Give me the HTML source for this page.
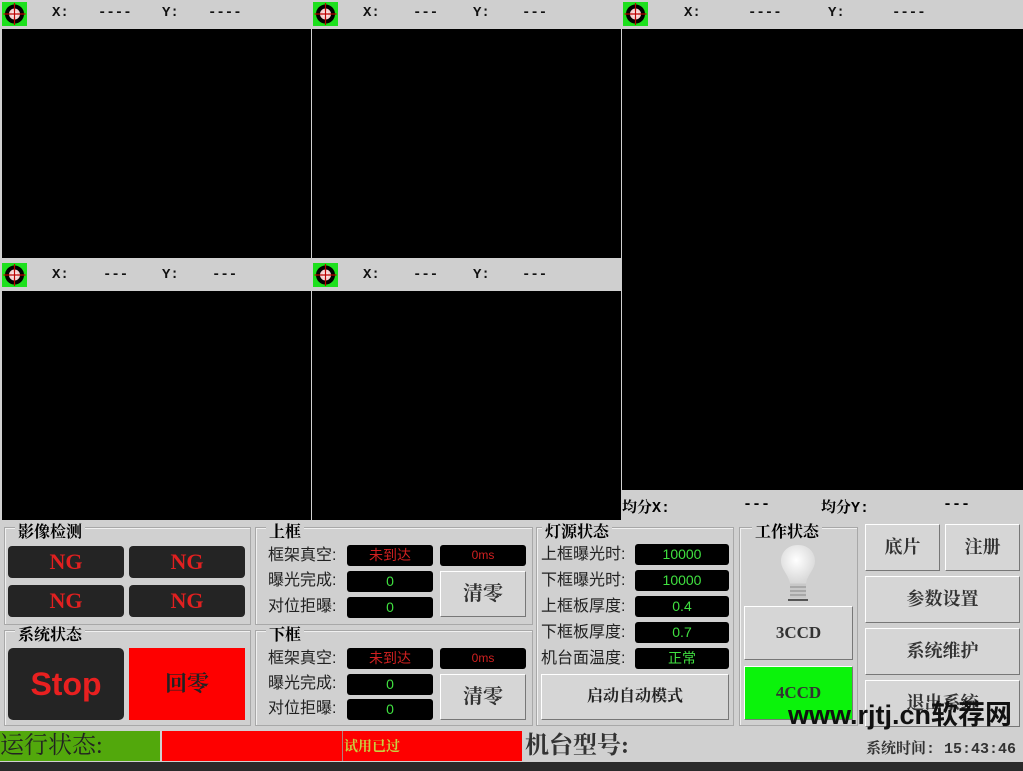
<!DOCTYPE html>
<html><head><meta charset="utf-8"><style>
*{margin:0;padding:0;box-sizing:border-box}
body{width:1023px;height:771px;background:#d0d0d0;position:relative;overflow:hidden;font-family:"Liberation Serif","Noto Serif CJK SC",serif}
.a{position:absolute}
.hdr{background:#cfcfcf;height:28px;font-family:"Liberation Mono",monospace;font-weight:bold;font-size:14px;color:#111}
.blk{background:#000}
.ic{position:absolute;top:2px;width:25px;height:24px;background:#1de01d}
.ic svg{display:block}
.grp{position:absolute;border:1px solid #a8a8a8;box-shadow:1px 1px 0 #f0f0f0 inset}
.gt{position:absolute;top:-4px;left:10px;background:#d0d0d0;font-weight:bold;font-size:16px;padding:0 3px;line-height:18px;font-family:"Liberation Serif","Noto Serif CJK SC",serif}
.ng{position:absolute;background:#242424;border-radius:4px;color:#e02020;font-weight:bold;font-size:22px;text-align:center;line-height:32px;font-family:"Liberation Serif",serif}
.lb{position:absolute;font-size:16px;color:#222;font-family:"Liberation Sans","Noto Sans CJK SC",sans-serif;line-height:20px}
.fd{position:absolute;background:#000;border-radius:3px;text-align:center;font-size:14px;line-height:21px;font-family:"Liberation Sans","Noto Sans CJK SC",sans-serif}
.r{color:#d02020}.g{color:#40e040}
.btn{position:absolute;background:#d6d6d6;border:1px solid #fff;border-right-color:#777;border-bottom-color:#777;text-align:center;font-weight:bold;font-size:18px;color:#333;font-family:"Liberation Serif","Noto Serif CJK SC",serif}
</style></head><body>
<div class="a hdr" style="left:0;top:0;width:1023px"></div>
<div class="a hdr" style="left:0;top:260px;width:621px;height:30px"></div>
<svg width="0" height="0" style="position:absolute"><defs><symbol id="cr" viewBox="0 0 25 24"><circle cx="12.5" cy="12" r="7.5" fill="#f6d0d0" stroke="#000" stroke-width="4"/><circle cx="12.5" cy="12" r="3" fill="#fbe8e8"/><path d="M12.5 1v22M1.5 12h22" stroke="#b00" stroke-width="1.2"/></symbol></defs></svg>
<div class="ic" style="left:2px"><svg width="25" height="24"><use href="#cr"/></svg></div>
<div class="ic" style="left:313px"><svg width="25" height="24"><use href="#cr"/></svg></div>
<div class="ic" style="left:623px"><svg width="25" height="24"><use href="#cr"/></svg></div>
<div class="ic" style="left:2px;top:263px"><svg width="25" height="24"><use href="#cr"/></svg></div>
<div class="ic" style="left:313px;top:263px"><svg width="25" height="24"><use href="#cr"/></svg></div>
<div class="a hdr" style="left:52px;top:5px;background:none">X:</div>
<div class="a hdr" style="left:98px;top:5px;background:none">----</div>
<div class="a hdr" style="left:162px;top:5px;background:none">Y:</div>
<div class="a hdr" style="left:208px;top:5px;background:none">----</div>
<div class="a hdr" style="left:363px;top:5px;background:none">X:</div>
<div class="a hdr" style="left:413px;top:5px;background:none">---</div>
<div class="a hdr" style="left:473px;top:5px;background:none">Y:</div>
<div class="a hdr" style="left:522px;top:5px;background:none">---</div>
<div class="a hdr" style="left:684px;top:5px;background:none">X:</div>
<div class="a hdr" style="left:748px;top:5px;background:none">----</div>
<div class="a hdr" style="left:828px;top:5px;background:none">Y:</div>
<div class="a hdr" style="left:892px;top:5px;background:none">----</div>
<div class="a hdr" style="left:52px;top:267px;background:none">X:</div>
<div class="a hdr" style="left:103px;top:267px;background:none">---</div>
<div class="a hdr" style="left:162px;top:267px;background:none">Y:</div>
<div class="a hdr" style="left:212px;top:267px;background:none">---</div>
<div class="a hdr" style="left:363px;top:267px;background:none">X:</div>
<div class="a hdr" style="left:413px;top:267px;background:none">---</div>
<div class="a hdr" style="left:473px;top:267px;background:none">Y:</div>
<div class="a hdr" style="left:522px;top:267px;background:none">---</div>
<div class="a blk" style="left:2px;top:29px;width:309px;height:229px"></div>
<div class="a blk" style="left:312px;top:29px;width:309px;height:229px"></div>
<div class="a blk" style="left:2px;top:291px;width:309px;height:229px"></div>
<div class="a blk" style="left:312px;top:291px;width:309px;height:229px"></div>
<div class="a blk" style="left:622px;top:29px;width:401px;height:461px"></div>
<div class="a" style="left:621px;top:490px;width:402px;height:30px;background:#cfcfcf;font-weight:bold;font-size:15px;font-family:'Liberation Mono','Noto Serif CJK SC',monospace">
<span class="a" style="left:1px;top:6px">均分X:</span><span class="a" style="left:122px;top:6px">---</span>
<span class="a" style="left:200px;top:6px">均分Y:</span><span class="a" style="left:322px;top:6px">---</span></div>
<div class="grp" style="left:4px;top:527px;width:247px;height:98px"><div class="gt">影像检测</div></div>
<div class="ng" style="left:8px;top:546px;width:116px;height:32px">NG</div>
<div class="ng" style="left:129px;top:546px;width:116px;height:32px">NG</div>
<div class="ng" style="left:8px;top:585px;width:116px;height:32px">NG</div>
<div class="ng" style="left:129px;top:585px;width:116px;height:32px">NG</div>
<div class="grp" style="left:4px;top:630px;width:247px;height:96px"><div class="gt">系统状态</div></div>
<div class="a" style="left:8px;top:648px;width:116px;height:72px;background:#242424;border-radius:5px;color:#e82020;font:bold 32px 'Liberation Sans',sans-serif;text-align:center;line-height:72px">Stop</div>
<div class="a" style="left:129px;top:648px;width:116px;height:72px;background:#fe0000;color:#222;font-weight:bold;font-size:22px;text-align:center;line-height:72px">回零</div>
<div class="grp" style="left:255px;top:527px;width:278px;height:98px"><div class="gt">上框</div></div>
<div class="lb" style="left:268px;top:546px">框架真空:</div>
<div class="lb" style="left:268px;top:571px">曝光完成:</div>
<div class="lb" style="left:268px;top:597px">对位拒曝:</div>
<div class="fd r" style="left:347px;top:545px;width:86px">未到达</div>
<div class="fd g" style="left:347px;top:571px;width:86px">0</div>
<div class="fd g" style="left:347px;top:597px;width:86px">0</div>
<div class="fd r" style="left:440px;top:545px;width:86px;font-size:12px">0ms</div>
<div class="btn" style="left:440px;top:571px;width:86px;height:46px;line-height:44px;font-size:20px">清零</div>
<div class="grp" style="left:255px;top:630px;width:278px;height:96px"><div class="gt">下框</div></div>
<div class="lb" style="left:268px;top:649px">框架真空:</div>
<div class="lb" style="left:268px;top:674px">曝光完成:</div>
<div class="lb" style="left:268px;top:699px">对位拒曝:</div>
<div class="fd r" style="left:347px;top:648px;width:86px">未到达</div>
<div class="fd g" style="left:347px;top:674px;width:86px">0</div>
<div class="fd g" style="left:347px;top:699px;width:86px">0</div>
<div class="fd r" style="left:440px;top:648px;width:86px;font-size:12px">0ms</div>
<div class="btn" style="left:440px;top:674px;width:86px;height:46px;line-height:44px;font-size:20px">清零</div>
<div class="grp" style="left:536px;top:527px;width:198px;height:199px"><div class="gt" style="left:5px">灯源状态</div></div>
<div class="lb" style="left:541px;top:545px">上框曝光时:</div>
<div class="lb" style="left:541px;top:571px">下框曝光时:</div>
<div class="lb" style="left:541px;top:597px">上框板厚度:</div>
<div class="lb" style="left:541px;top:623px">下框板厚度:</div>
<div class="lb" style="left:541px;top:649px">机台面温度:</div>
<div class="fd g" style="left:635px;top:544px;width:94px">10000</div>
<div class="fd g" style="left:635px;top:570px;width:94px">10000</div>
<div class="fd g" style="left:635px;top:596px;width:94px">0.4</div>
<div class="fd g" style="left:635px;top:622px;width:94px">0.7</div>
<div class="fd g" style="left:635px;top:648px;width:94px">正常</div>
<div class="btn" style="left:541px;top:674px;width:188px;height:46px;line-height:44px;font-size:16px;color:#222">启动自动模式</div>
<div class="grp" style="left:739px;top:527px;width:119px;height:199px"><div class="gt" style="left:12px">工作状态</div></div>
<svg class="a" style="left:776px;top:543px" width="44" height="60" viewBox="0 0 44 60"><defs><radialGradient id="bg" cx="0.45" cy="0.4" r="0.6"><stop offset="0" stop-color="#fff"/><stop offset="1" stop-color="#d8d8d8"/></radialGradient></defs><path d="M22 2C11 2 5 10 5 18c0 8 7 13 9 22h16c2-9 9-14 9-22C39 10 33 2 22 2z" fill="url(#bg)"/><rect x="14" y="41" width="16" height="14" fill="#c8c8c8"/><path d="M14 44h16M14 48h16M14 52h16" stroke="#888"/><rect x="12" y="56" width="20" height="2" fill="#555"/></svg>
<div class="btn" style="left:744px;top:606px;width:109px;height:54px;line-height:52px;font-size:17px">3CCD</div>
<div class="btn" style="left:744px;top:666px;width:109px;height:54px;line-height:52px;font-size:17px;background:#0bf30b">4CCD</div>
<div class="btn" style="left:865px;top:524px;width:75px;height:47px;line-height:44px">底片</div>
<div class="btn" style="left:945px;top:524px;width:75px;height:47px;line-height:44px">注册</div>
<div class="btn" style="left:865px;top:576px;width:155px;height:47px;line-height:44px">参数设置</div>
<div class="btn" style="left:865px;top:628px;width:155px;height:47px;line-height:44px">系统维护</div>
<div class="btn" style="left:865px;top:680px;width:155px;height:47px;line-height:44px">退出系统</div>
<div class="a" style="left:0;top:731px;width:160px;height:30px;background:#52a80c;font-size:24px;line-height:30px;color:#222;font-family:'Liberation Serif','Noto Serif CJK SC',serif">运行状态:</div>
<div class="a" style="left:162px;top:731px;width:360px;height:30px;background:#fe0000"></div>
<div class="a" style="left:342px;top:731px;width:1px;height:30px;background:#b08080"></div>
<div class="a" style="left:344px;top:736px;font-size:14px;font-weight:bold;color:#c8d040">试用已过</div>
<div class="a" style="left:525px;top:731px;font-size:24px;font-weight:bold;color:#333;line-height:30px">机台型号:</div>
<div class="a" style="left:866px;top:737px;font-size:15px;font-weight:bold;color:#333;font-family:'Liberation Mono','Noto Serif CJK SC',monospace">系统时间: 15:43:46</div>
<div class="a" style="left:0;top:762px;width:1023px;height:9px;background:#2a2a2a"></div>
<div class="a" style="left:788px;top:699px;font:bold 27px 'Liberation Sans','Noto Sans CJK SC',sans-serif;color:#111;line-height:32px">www.rjtj.cn软荐网</div>
</body></html>
